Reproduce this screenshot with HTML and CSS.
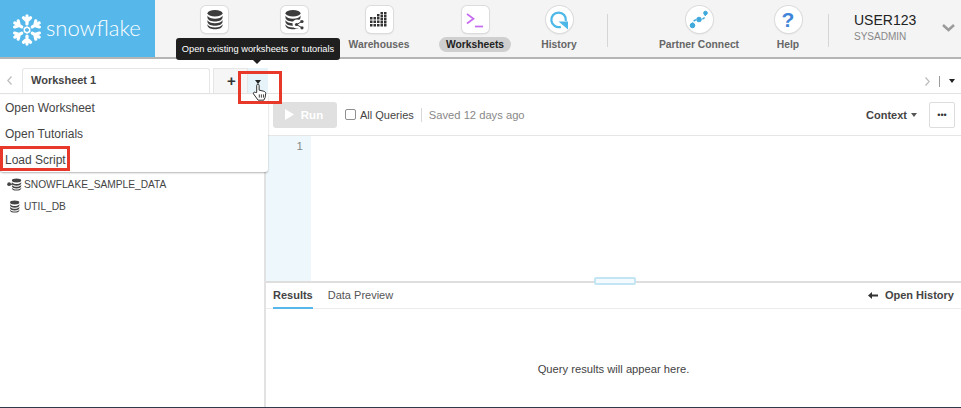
FILE: index.html
```html
<!DOCTYPE html>
<html lang="en">
<head>
<meta charset="utf-8">
<title>Snowflake Worksheets</title>
<link rel="stylesheet" href="styles.css">
</head>
<body>
<div class="app">
  <svg width="0" height="0" class="defs">
    <defs>
      <g id="db">
        <ellipse cx="10" cy="4.2" rx="7.5" ry="3.2"/>
        <path d="M2.5 6.6c1 2.4 4 3.2 7.500 3.200s6.500-.8 7.500-3.200v2.300c-.6 2.500-4 3.500-7.500 3.500s-6.900-1-7.500-3.500z"/>
        <path d="M2.500 11c1 2.400 4 3.200 7.500 3.200s6.500-.8 7.500-3.200v2.300c-.6 2.500-4 3.500-7.500 3.500s-6.900-1-7.500-3.500z"/>
        <path d="M2.500 15.300c1 2.400 4 3.200 7.500 3.200s6.500-.8 7.500-3.200v1.500c-.6 2.500-4 3.500-7.500 3.500s-6.900-1-7.500-3.500z"/>
      </g>
    </defs>
  </svg>
  <header class="topbar">
    <div class="logo">
      <svg class="logo-mark" width="32" height="32" viewBox="-17 -17 34 34" fill="none" stroke="#fff" stroke-width="3.400" stroke-linecap="round" stroke-linejoin="round">
        <path d="M0-6.500V-15M-3.800-13 0-9.500 3.800-13"/>
        <g transform="rotate(60)"><path d="M0-6.500V-15M-3.800-13 0-9.500 3.800-13"/></g>
        <g transform="rotate(120)"><path d="M0-6.500V-15M-3.800-13 0-9.500 3.800-13"/></g>
        <g transform="rotate(180)"><path d="M0-6.500V-15M-3.800-13 0-9.500 3.800-13"/></g>
        <g transform="rotate(240)"><path d="M0-6.500V-15M-3.800-13 0-9.500 3.800-13"/></g>
        <g transform="rotate(300)"><path d="M0-6.500V-15M-3.800-13 0-9.500 3.800-13"/></g>
        <path d="M0-3.200 2.800-1.600V1.600L0 3.200-2.800 1.600V-1.600z" stroke-width="1.600"/>
      </svg>
      <span class="logo-text">snowflake</span>
    </div>
    <nav class="nav">
      <div class="nav-item w-db">
        <span class="tile"><svg width="20" height="21" viewBox="0 0 20 21" fill="#3c3c3c"><use href="#db"/></svg></span>
        <span class="nav-label"></span>
      </div>
      <div class="nav-item w-share">
        <span class="tile"><svg width="22" height="21" viewBox="0 0 22 21" fill="#3c3c3c">
          <use href="#db"/>
          <circle cx="14" cy="15" r="4.500" fill="#fff"/>
          <circle cx="13.500" cy="15.500" r="1.600"/><circle cx="19" cy="12.500" r="1.600"/><circle cx="19" cy="18.800" r="1.600"/>
          <path d="M13.500 15.500 19 12.500M13.500 15.500 19 18.800" stroke="#3c3c3c" stroke-width="1" fill="none"/>
        </svg></span>
        <span class="nav-label"></span>
      </div>
      <div class="nav-item w-wh">
        <span class="tile"><svg width="18" height="16" viewBox="0 0 18 16" fill="#333">
          <rect x="0" y="5" width="2.500" height="2.500"/><rect x="0" y="8.500" width="2.500" height="2.500"/><rect x="0" y="12" width="2.500" height="2.500"/>
          <rect x="3.500" y="5" width="2.500" height="2.500"/><rect x="3.500" y="8.500" width="2.500" height="2.500"/><rect x="3.500" y="12" width="2.500" height="2.500"/>
          <rect x="7" y="2" width="2.500" height="2.500"/><rect x="7" y="5" width="2.500" height="2.500"/><rect x="7" y="8.500" width="2.500" height="2.500"/><rect x="7" y="12" width="2.500" height="2.500"/>
          <rect x="10.500" y="0" width="2.500" height="2.500"/><rect x="10.500" y="3" width="2.500" height="2.500"/><rect x="10.500" y="6" width="2.500" height="2.500"/><rect x="10.500" y="9" width="2.500" height="2.500"/><rect x="10.500" y="12" width="2.500" height="2.500"/>
          <rect x="14" y="0" width="2.500" height="2.500"/><rect x="14" y="3" width="2.500" height="2.500"/><rect x="14" y="6" width="2.500" height="2.500"/><rect x="14" y="9" width="2.500" height="2.500"/><rect x="14" y="12" width="2.500" height="2.500"/>
        </svg></span>
        <span class="nav-label">Warehouses</span>
      </div>
      <div class="nav-item w-ws">
        <span class="tile"><svg width="18" height="16" viewBox="0 0 18 16" fill="none" stroke="#c66bf0" stroke-width="1.700"><path d="M1 2 7.500 6.800 1 11.500"/><path d="M9 14.500h8"/></svg></span>
        <span class="nav-label active">Worksheets</span>
      </div>
      <div class="nav-item w-hist">
        <span class="tile round"><svg width="20" height="20" viewBox="0 0 20 20" fill="none"><path d="M11.800 16.800A7.300 7.300 0 1 1 16.800 11" stroke="#4db8e8" stroke-width="2.300"/><path d="M9.500 11.500h9.500v8z" fill="#4db8e8"/></svg></span>
        <span class="nav-label">History</span>
      </div>
      <span class="nav-divider div-a"></span>
      <div class="nav-item w-partner">
        <span class="tile round"><svg width="20" height="20" viewBox="0 0 20 20" fill="#3fa9dc" stroke="#3fa9dc"><path d="M3.500 15.500c0-5 2.500-6 6.500-6s6.500-1 6.500-7" fill="none" stroke-width="1.500" stroke-dasharray="3 1.500"/><circle cx="3.500" cy="15.500" r="2.300"/><circle cx="10" cy="9.500" r="2.300"/><circle cx="16.500" cy="3" r="1.800"/></svg></span>
        <span class="nav-label">Partner Connect</span>
      </div>
      <div class="nav-item w-help">
        <span class="tile round"><span class="qmark">?</span></span>
        <span class="nav-label">Help</span>
      </div>
      <span class="nav-divider div-b"></span>
      <div class="user">
        <span class="user-name">USER123</span>
        <span class="user-role">SYSADMIN</span>
      </div>
      <svg class="user-chevron" width="13" height="8" viewBox="0 0 13 8" fill="none" stroke="#9b9b9b" stroke-width="2.600"><path d="M1 1 6.500 6 12 1"/></svg>
    </nav>
  </header>

  <div class="tabbar">
    <svg class="chev" width="5" height="9" viewBox="0 0 5 9" fill="none" stroke="#bdbdbd" stroke-width="1.300"><path d="M4.500.5.800 4.500l3.700 4"/></svg>
    <div class="tab">Worksheet 1</div>
    <div class="tab-plus">+</div>
    <div class="tab-arrow"><span class="caret dark"></span></div>
    <div class="tab-end">
      <svg width="5" height="9" viewBox="0 0 5 9" fill="none" stroke="#bdbdbd" stroke-width="1.300"><path d="M.5.500l3.700 4-3.700 4"/></svg>
      <span class="tab-end-sep"></span>
      <span class="caret dark small"></span>
    </div>
  </div>

  <div class="workspace">
    <aside class="sidebar">
      <div class="db-row first">
        <svg width="16" height="13" viewBox="0 0 25 21" fill="#444"><g transform="translate(5 0)"><use href="#db"/></g><circle cx="3" cy="10" r="3"/><path d="M3 10h6" stroke="#444" stroke-width="2"/></svg>
        <span>SNOWFLAKE_SAMPLE_DATA</span>
      </div>
      <div class="db-row">
        <svg width="16" height="13" viewBox="0 0 25 21" fill="#444"><g transform="translate(2 0)"><use href="#db"/></g></svg>
        <span>UTIL_DB</span>
      </div>
    </aside>
    <main class="main">
      <div class="toolbar">
        <button class="run" type="button"><svg width="9" height="11" viewBox="0 0 9 11" fill="#fff"><path d="M0 0 9 5.500 0 11z"/></svg>Run</button>
        <span class="check"></span>
        <span class="all-q">All Queries</span>
        <span class="tool-sep"></span>
        <span class="saved">Saved 12 days ago</span>
        <span class="context">Context</span>
        <span class="caret"></span>
        <button class="more" type="button">•••</button>
      </div>
      <div class="editor">
        <div class="gutter">1</div>
      </div>
      <div class="results-head">
        <span class="handle"></span>
        <span class="rtab active">Results</span>
        <span class="rtab">Data Preview</span>
        <span class="open-history">
          <svg width="10" height="7" viewBox="0 0 10 7" fill="#333"><path d="M0 3.500 4 0v2.400h6v2.200H4V7z"/></svg>
          Open History
        </span>
      </div>
      <div class="results-body">Query results will appear here.</div>
    </main>
  </div>

  <div class="menu">
    <div class="menu-item">Open Worksheet</div>
    <div class="menu-item">Open Tutorials</div>
    <div class="menu-item">Load Script</div>
  </div>

  <div class="tooltip">Open existing worksheets or tutorials</div>
  <div class="mark mark-arrow"></div>
  <div class="mark mark-load"></div>
  <svg class="cursor" width="15" height="18" viewBox="0 0 16 19">
    <path d="M5 10V2.500a1.300 1.300 0 0 1 2.600 0V7.500l5 1.200c1.300.4 2 1.200 2 2.400l-.6 4.300-1.400 2.800H6.500L1.600 11.500c-.8-1.200 1-2.500 2-1.500z" fill="#fff" stroke="#222" stroke-width="1"/>
    <path d="M7.800 12v3.500M10 12v3.500M12.200 12v3.500" stroke="#222" stroke-width=".9"/>
  </svg>
</div>
</body>
</html>
```
FILE: styles.css
```css
* { box-sizing: border-box; }
html, body { margin: 0; height: 100%; background: #fff; }
body { font-family: "Liberation Sans", Arial, sans-serif; font-size: 11px; color: #444; overflow: hidden; }
.defs { position: absolute; }
.app { position: relative; width: 961px; height: 408px; display: flex; flex-direction: column; border-bottom: 1px solid #2f3a4a; overflow: hidden; }

.topbar { height: 59px; flex: none; display: flex; background: #f4f4f4; border-bottom: 2px solid #b5b5b5; }
.logo { width: 155px; flex: none; background: #56b8ea; display: flex; align-items: center; padding-left: 11px; gap: 3px; }
.logo-mark { flex: none; margin-top: 2px; }
.logo-text { font-family: Lato, sans-serif; font-weight: 300; font-size: 22px; color: #fff; margin-top: -2px; }

.nav { flex: 1; display: flex; align-items: flex-start; position: relative; }
.nav-item { display: flex; flex-direction: column; align-items: center; padding-top: 6px; gap: 4px; flex: none; }
.w-db { width: 79px; margin-left: 20px; }
.w-share { width: 80px; }
.w-wh { width: 90px; }
.w-ws { width: 102px; }
.w-hist { width: 66px; }
.w-partner { width: 110px; margin-left: 36px; }
.w-help { width: 68px; }
.tile { width: 27px; height: 27px; background: #fff; border-radius: 5px; box-shadow: 0 0 0 1px #dcdcdc, 0 1px 2px rgba(0,0,0,.15); display: flex; align-items: center; justify-content: center; }
.tile.round { border-radius: 50%; }
.nav-label { font-size: 10.300px; font-weight: 700; color: #666; line-height: 15px; height: 15px; padding: 0 7px; border-radius: 8px; white-space: nowrap; }
.nav-label.active { color: #222; background: #cfcfcf; }
.nav-divider { width: 1px; height: 33px; background: #d6d6d6; margin-top: 14px; flex: none; }
.div-a { margin-left: 15px; }
.div-b { margin-left: 6px; }
.qmark { font-size: 21px; font-weight: 700; color: #3f86d8; line-height: 1; }
.user { display: flex; flex-direction: column; margin-left: 25px; padding-top: 12px; width: 88px; }
.user-name { font-size: 14px; color: #222; line-height: 16px; }
.user-role { font-size: 10px; color: #888; line-height: 14px; margin-top: 2px; }
.user-chevron { margin-top: 24px; }

.tabbar { height: 35px; flex: none; display: flex; align-items: flex-end; padding-left: 7px; border-bottom: 1px solid #e2e2e2; position: relative; }
.chev { margin-bottom: 8px; margin-right: 10px; flex: none; }
.tab { width: 188px; height: 25px; border: 1px solid #e6e6e6; border-bottom: 0; border-radius: 3px 3px 0 0; font-weight: 700; color: #444; line-height: 23px; padding-left: 8px; }
.tab-plus { width: 35px; height: 25px; margin-left: 3px; background: #f6f6f6; border: 1px solid #e6e6e6; border-bottom: 0; font-size: 15px; font-weight: 700; color: #333; text-align: center; line-height: 23px; padding-left: 2px; }
.tab-arrow { width: 20px; height: 25px; background: #e6f4fa; display: flex; justify-content: center; padding-top: 12px; }
.caret { display: inline-block; width: 0; height: 0; border-left: 3px solid transparent; border-right: 3px solid transparent; border-top: 4px solid #555; }
.caret.dark { border-top: 4px solid #222; }
.tab-end { margin-left: auto; display: flex; align-items: center; gap: 9px; height: 24px; padding-right: 6px; }
.tab-end-sep { width: 1px; height: 11px; background: #999; }

.workspace { flex: 1; display: flex; min-height: 0; }
.sidebar { width: 266px; flex: none; border-right: 2px solid #e2e2e2; padding: 79px 0 0 7px; }
.db-row { display: flex; align-items: center; gap: 1px; height: 22px; font-size: 10.200px; color: #444; }
.main { flex: 1; display: flex; flex-direction: column; min-width: 0; }
.toolbar { height: 42px; flex: none; display: flex; align-items: center; padding: 0 6px 0 7px; border-bottom: 1px solid #e6e6e6; }
.run { width: 64px; height: 26px; background: #e0e0e0; border: 0; border-radius: 3px; color: #fff; font: 700 11.500px "Liberation Sans", Arial, sans-serif; display: flex; align-items: center; justify-content: center; gap: 7px; padding: 0 2px 0 0; }
.check { width: 11px; height: 11px; border: 1px solid #8f8f8f; border-radius: 2px; margin-left: 8px; background: #fff; }
.all-q { margin-left: 4px; color: #444; }
.tool-sep { width: 1px; height: 14px; background: #d8d8d8; margin: 0 7px; }
.saved { color: #888; font-size: 11.200px; }
.context { margin-left: auto; font-weight: 700; color: #444; margin-right: 4px; }
.more { width: 26px; height: 26px; margin-left: 12px; background: #fff; border: 1px solid #ddd; border-radius: 2px; font-size: 9px; color: #333; padding: 0; }
.editor { height: 147px; flex: none; display: flex; border-bottom: 2px solid #dedede; }
.gutter { width: 45px; background: #eef8fc; text-align: right; color: #888; padding: 4px 8px 0 0; line-height: 13px; font-size: 11.500px; }
.results-head { height: 26px; flex: none; display: flex; align-items: stretch; padding: 0 7px; gap: 15px; border-bottom: 1px solid #ececec; position: relative; }
.handle { position: absolute; left: 328px; top: -6px; width: 42px; height: 8px; background: #f4fbfe; border: 2px solid #c4e6f4; border-radius: 2px; }
.rtab { line-height: 25px; color: #555; }
.rtab.active { font-weight: 700; color: #444; border-bottom: 2px solid #56b8ea; height: 26px; }
.open-history { margin-left: auto; font-weight: 700; color: #444; line-height: 25px; display: flex; align-items: center; gap: 7px; }
.results-body { flex: 1; text-align: center; padding-top: 53px; color: #444; line-height: 14px; font-size: 11.200px; }

.menu { position: absolute; left: 0; top: 95px; width: 268px; height: 77px; background: #fff; border-radius: 0 0 3px 3px; box-shadow: 0 1px 2px rgba(0,0,0,.3); z-index: 2; }
.menu-item { height: 26px; line-height: 26px; padding-left: 5px; color: #444; font-size: 12px; }

.tooltip { position: absolute; left: 176px; top: 38px; width: 164px; height: 22px; background: #1f1f1f; color: #fff; border-radius: 3px; font-size: 9.300px; line-height: 22px; text-align: center; white-space: nowrap; z-index: 3; }
.tooltip::after { content: ""; position: absolute; left: 77px; top: 22px; border-left: 4px solid transparent; border-right: 4px solid transparent; border-top: 4px solid #1f1f1f; }
.mark { position: absolute; border: 3px solid #e8382a; z-index: 4; }
.mark-arrow { left: 238px; top: 71px; width: 44px; height: 33px; }
.mark-load { left: 0; top: 146px; width: 70px; height: 25px; }
.cursor { position: absolute; left: 252px; top: 83px; z-index: 5; }
```
